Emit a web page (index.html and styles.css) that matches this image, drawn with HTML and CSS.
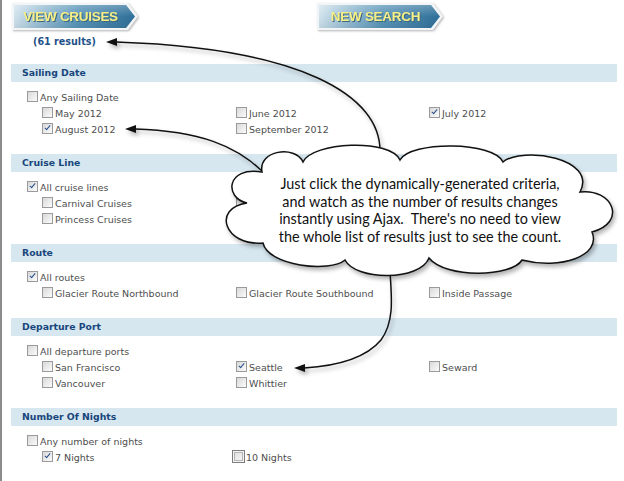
FILE: index.html
```html
<!DOCTYPE html>
<html lang="en">
<head>
    <meta charset="UTF-8">
    <meta name="viewport" content="width=device-width, initial-scale=1.0">
    <title>Cruise Search</title>
    <link rel="stylesheet" href="styles.css">
</head>
<body>
    <div class="toolbar">
        <a href="#" class="ribbon"><span class="ribbon-edge"><span class="ribbon-face">VIEW CRUISES</span></span></a>
        <a href="#" class="ribbon"><span class="ribbon-edge"><span class="ribbon-face">NEW SEARCH</span></span></a>
    </div>

    <div class="count">(61 results)</div>

    <div class="filters">
        <section class="facet">
            <h3>Sailing Date</h3>
            <div class="all"><span class="box"></span>Any Sailing Date</div>
            <div class="options">
                <div class="opt"><span class="box"></span>May 2012</div>
                <div class="opt"><span class="box"></span>June 2012</div>
                <div class="opt"><span class="box on"></span>July 2012</div>
                <div class="opt"><span class="box on"></span>August 2012</div>
                <div class="opt"><span class="box"></span>September 2012</div>
            </div>
        </section>

        <section class="facet">
            <h3>Cruise Line</h3>
            <div class="all"><span class="box on"></span>All cruise lines</div>
            <div class="options">
                <div class="opt"><span class="box"></span>Carnival Cruises</div>
                <div class="opt"><span class="box"></span></div>
                <div class="opt"></div>
                <div class="opt"><span class="box"></span>Princess Cruises</div>
            </div>
        </section>

        <section class="facet">
            <h3>Route</h3>
            <div class="all"><span class="box on"></span>All routes</div>
            <div class="options">
                <div class="opt"><span class="box"></span>Glacier Route Northbound</div>
                <div class="opt"><span class="box"></span>Glacier Route Southbound</div>
                <div class="opt"><span class="box"></span>Inside Passage</div>
            </div>
        </section>

        <section class="facet">
            <h3>Departure Port</h3>
            <div class="all"><span class="box"></span>All departure ports</div>
            <div class="options">
                <div class="opt"><span class="box"></span>San Francisco</div>
                <div class="opt"><span class="box on"></span>Seattle</div>
                <div class="opt"><span class="box"></span>Seward</div>
                <div class="opt"><span class="box"></span>Vancouver</div>
                <div class="opt"><span class="box"></span>Whittier</div>
            </div>
        </section>

        <section class="facet">
            <h3>Number Of Nights</h3>
            <div class="all"><span class="box"></span>Any number of nights</div>
            <div class="options">
                <div class="opt"><span class="box on"></span>7 Nights</div>
                <div class="opt"><span class="box focus"></span>10 Nights</div>
            </div>
        </section>
    </div>

    <!-- Callout bubble with pointers -->
    <div class="callout">
        <svg class="callout-art" viewBox="0 0 624 481" width="624" height="481">
            <g class="pointer">
                <path d="M380,153 C382,95 300,48 116,42" />
                <polygon points="106,42 117,38 117,46" />
                <path d="M262,171 C236,146 200,131 135,129" />
                <polygon points="125,129 136,125 136,133" />
                <path d="M390,272 C392,300 394,322 381,340 C366,358 336,366 304,368" />
                <polygon points="294,368 305,364 305,372" />
            </g>
            <path class="cloud" d="M262,172
                C258,150 295,145 303,162
                C312,142 390,138 400,160
                C410,141 494,141 503,162
                C522,146 598,158 580,192
                C612,188 628,222 592,232
                C602,256 560,270 522,260
                C512,277 446,279 429,258
                C420,281 356,281 345,260
                C330,273 268,266 263,243
                C224,246 212,208 247,203
                C224,198 226,166 262,172 Z" />
        </svg>
        <p class="callout-text">Just click the dynamically-generated criteria,<br>and watch as the number of results changes<br>instantly using Ajax.&nbsp; There's no need to view<br>the whole list of results just to see the count.</p>
    </div>
</body>
</html>
```

FILE: styles.css
```css
body {
    margin: 0;
    min-height: 100vh;
    box-sizing: border-box;
    border-left: 2px solid #8c8c8c;
    background-color: #fff;
    font-family: "DejaVu Sans", Verdana, sans-serif;
    font-size: 9.5px;
    color: #4e4e4e;
}
.toolbar {
    display: flex;
    gap: 179px;
    padding: 3px 0 0 10px;
}
.ribbon {
    display: block;
    width: 126px;
    height: 27px;
    filter: drop-shadow(1px 1px 1px rgba(0, 0, 0, 0.3));
    text-decoration: none;
}
.ribbon-edge {
    display: block;
    height: 100%;
    padding: 2px;
    box-sizing: border-box;
    background-color: #f1f5f8;
    clip-path: polygon(0 0, 116px 0, 126px 50%, 116px 100%, 0 100%);
}
.ribbon-face {
    display: block;
    height: 100%;
    padding-right: 9px;
    clip-path: polygon(0 0, 112px 0, 121px 50%, 112px 100%, 0 100%);
    background:
        linear-gradient(180deg, rgba(255, 255, 255, 0.25), rgba(255, 255, 255, 0) 50%, rgba(0, 0, 0, 0.05)),
        linear-gradient(100deg, #d4e5ee 0%, #9cc0d5 22%, #5a95b8 52%, #2e6e98 100%);
    font-family: "Liberation Sans", Arial, sans-serif;
    font-weight: bold;
    font-size: 13.5px;
    letter-spacing: -0.3px;
    line-height: 23px;
    text-align: center;
    color: #f7ef86;
    text-shadow: 1px 1px 0 #3c6883;
}
.count {
    margin: 6px 0 0 31px;
    line-height: 12px;
    font-size: 9.6px;
    font-weight: bold;
    color: #1f5189;
}
.filters {
    width: 606px;
    margin: 16px 0 0 9px;
}
.facet {
    padding-bottom: 16px;
}
.facet h3 {
    margin: 0;
    height: 18px;
    padding-left: 11px;
    line-height: 18px;
    font-size: 9.3px;
    color: #17467c;
    background-color: #d7e7f0;
}
.all {
    margin-top: 7px;
    padding-left: 16px;
    height: 17px;
    line-height: 17px;
}
.options {
    display: grid;
    grid-template-columns: 194px 193px 1fr;
    padding-left: 31px;
}
.opt {
    height: 16px;
    line-height: 16px;
    white-space: nowrap;
}
.box {
    position: relative;
    display: inline-block;
    width: 9px;
    height: 9px;
    margin-right: 2px;
    vertical-align: -1px;
    border: 1px solid #9a9a9a;
    background: linear-gradient(135deg, #d9d9d9, #fbfbfb);
}
.box.on::after {
    content: "";
    position: absolute;
    left: 3px;
    top: 0;
    width: 2px;
    height: 5px;
    border: solid #27508e;
    border-width: 0 1.5px 1.5px 0;
    transform: rotate(40deg);
}
.box.focus {
    width: 11px;
    height: 11px;
    margin-left: -4px;
    margin-right: 1px;
    vertical-align: -2px;
    border-color: #7d7d7d;
    box-shadow: inset 0 0 0 1px #f3f3f3, inset 0 0 0 2px #b5b5b5;
}
.callout {
    position: absolute;
    top: 0;
    left: 0;
    width: 624px;
    height: 481px;
    pointer-events: none;
}
.callout-art {
    display: block;
    filter: drop-shadow(2px 3px 2px rgba(0, 0, 0, 0.3));
}
.pointer path {
    fill: none;
    stroke: #111;
    stroke-width: 1.5;
}
.pointer polygon {
    fill: #111;
}
.cloud {
    fill: #fff;
    stroke: #111;
    stroke-width: 1.5;
}
.callout-text {
    position: absolute;
    top: 175px;
    left: 260px;
    width: 320px;
    margin: 0;
    font-family: Lato, "Open Sans", sans-serif;
    font-size: 14.4px;
    line-height: 17.7px;
    text-align: center;
    color: #111;
}
```
